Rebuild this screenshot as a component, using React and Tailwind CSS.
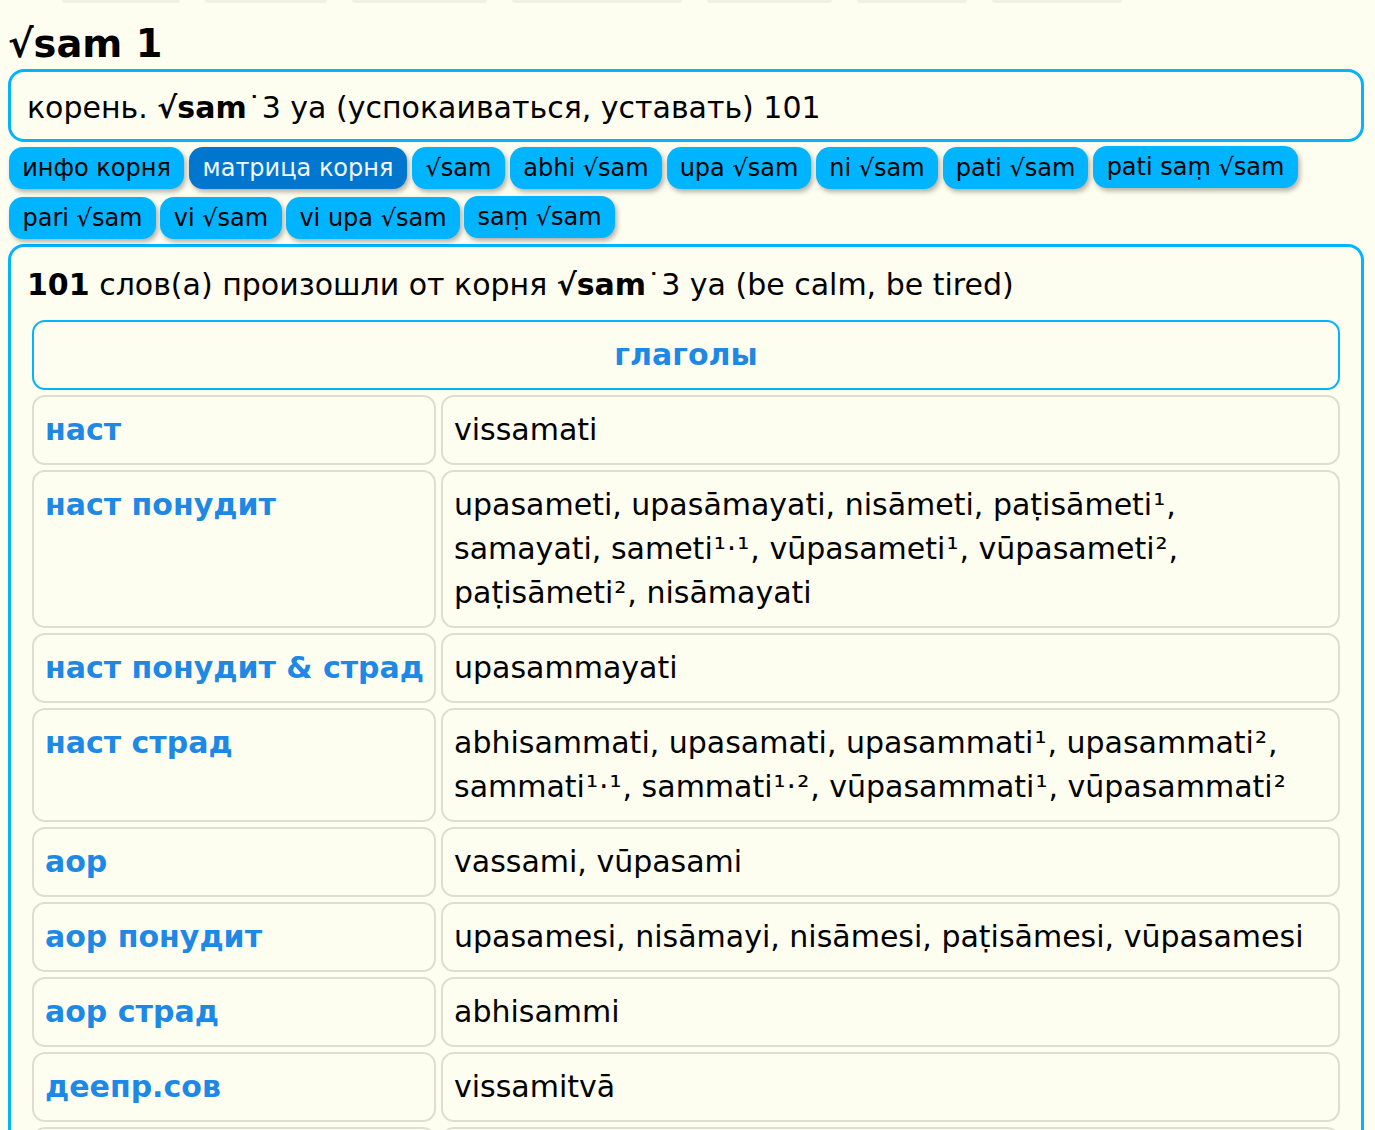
import React from "react";

const tabsRow1 = [
  { t: "инфо корня", w: 175 },
  { t: "матрица корня", w: 218, active: true },
  { t: "√sam", w: 93 },
  { t: "abhi √sam", w: 152 },
  { t: "upa √sam", w: 144 },
  { t: "ni √sam", w: 122 },
  { t: "pati √sam", w: 145 },
  { t: "pati saṃ √sam", w: 205, up: true },
];
const tabsRow2 = [
  { t: "pari √sam", w: 147 },
  { t: "vi √sam", w: 122 },
  { t: "vi upa √sam", w: 174 },
  { t: "saṃ √sam", w: 151, up: true },
];

const rows = [
  ["наст", ["vissamati"]],
  [
    "наст понудит",
    [
      "upasameti, upasāmayati, nisāmeti, paṭisāmeti¹,",
      "samayati, sameti¹·¹, vūpasameti¹, vūpasameti²,",
      "paṭisāmeti², nisāmayati",
    ],
  ],
  ["наст понудит & страд", ["upasammayati"]],
  [
    "наст страд",
    [
      "abhisammati, upasamati, upasammati¹, upasammati²,",
      "sammati¹·¹, sammati¹·², vūpasammati¹, vūpasammati²",
    ],
  ],
  ["аор", ["vassami, vūpasami"]],
  ["аор понудит", ["upasamesi, nisāmayi, nisāmesi, paṭisāmesi, vūpasamesi"]],
  ["аор страд", ["abhisammi"]],
  ["деепр.сов", ["vissamitvā"]],
  ["прич.прош", ["vissamita"]],
];

function Sup({ s }) {
  const parts = s.split(/([¹²·]+)/);
  return (
    <>
      {parts.map((p, i) =>
        /[¹²·]/.test(p) ? (
          <span key={i} className="tracking-[1px] pl-[1px]">
            {p}
          </span>
        ) : (
          <React.Fragment key={i}>{p}</React.Fragment>
        )
      )}
    </>
  );
}

function Tab({ t, w, active, up }) {
  return (
    <div
      style={{ width: w }}
      className={
        "h-[42px] shrink-0 flex items-center justify-center rounded-[14px] text-[24px] leading-none whitespace-nowrap shadow-[2px_3px_5px_rgba(0,0,0,0.3)] " +
        (active ? "bg-[#0076ce] text-[#f4f8ff]" : "bg-[#00b4ff] text-black") +
        (up ? " -mt-px" : "")
      }
    >
      {t}
    </div>
  );
}

export default function App() {
  return (
    <div className="bg-[#fdfdf0] font-['DejaVu_Sans',sans-serif] text-black overflow-hidden h-[1130px]">
      <div className="flex h-[3px] gap-[25px] pl-[62px]">
        <div className="w-[118px] bg-[#f0f0e4] rounded-b-md" />
        <div className="w-[122px] bg-[#f0f0e4] rounded-b-md" />
        <div className="w-[135px] bg-[#f0f0e4] rounded-b-md" />
        <div className="w-[170px] bg-[#f0f0e4] rounded-b-md" />
        <div className="w-[125px] bg-[#f0f0e4] rounded-b-md" />
        <div className="w-[110px] bg-[#f0f0e4] rounded-b-md" />
        <div className="w-[130px] bg-[#f0f0e4] rounded-b-md" />
      </div>
      <div className="ml-[8px] mr-[11px]">
        <h1 className="text-[38.4px] font-bold leading-[44px] pt-[19px] pb-[3px]">√sam 1</h1>
        <div className="border-[3px] border-[#00b4ff] rounded-[16px] px-[16px] pt-[14px] pb-[9px] text-[30px] leading-[44px]">
          корень. <b>√sam</b>˙3 ya (успокаиваться, уставать) 101
        </div>
        <div className="mt-[5px] flex flex-col gap-[8px] pl-[1px]">
          <div className="flex gap-[5px]">
            {tabsRow1.map((x) => (
              <Tab key={x.t} {...x} />
            ))}
          </div>
          <div className="flex gap-[4px]">
            {tabsRow2.map((x) => (
              <Tab key={x.t} {...x} />
            ))}
          </div>
        </div>
        <div className="mt-[5px] border-[3px] border-[#00b4ff] rounded-[16px] px-[16px] pt-[16px] pb-[16px] text-[30px] leading-[44px]">
          <p>
            <b>101</b> слов(а) произошли от корня <b>√sam</b>˙3 ya (be calm, be tired)
          </p>
          <div className="mt-[13px] px-[5px] grid grid-cols-[404px_1fr] gap-[5px]">
            <div className="col-span-2 border-2 border-[#00b4ff] rounded-[13px] py-[11px] text-center font-bold text-[#1e88e5]">
              глаголы
            </div>
            {rows.map(([a, lines]) => (
              <React.Fragment key={a}>
                <div className="border-2 border-[#deddd0] rounded-[13px] px-[11px] py-[11px] font-bold text-[#1e88e5] whitespace-nowrap">
                  {a}
                </div>
                <div className="border-2 border-[#deddd0] rounded-[13px] px-[11px] py-[11px]">
                  {lines.map((l, i) => (
                    <div key={i} className="whitespace-nowrap">
                      <Sup s={l} />
                    </div>
                  ))}
                </div>
              </React.Fragment>
            ))}
          </div>
        </div>
      </div>
    </div>
  );
}
